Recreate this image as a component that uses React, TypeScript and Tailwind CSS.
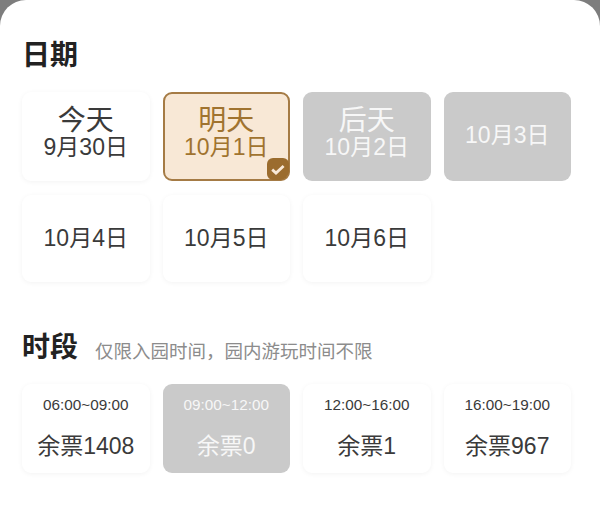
import React from 'react';

const font = {fontFamily: '"Liberation Sans", "Noto Sans CJK SC", sans-serif'};

const card =
  'relative flex flex-col items-center justify-center rounded-[9px] bg-white shadow-[0_1px_5px_rgba(0,0,0,0.05)]';
const off = 'relative flex flex-col items-center justify-center rounded-[9px] bg-[#cacaca] text-[#f7f7f7]';

const Check = () => (
  <span className="absolute bottom-[-1px] right-[-1px] flex h-[22px] w-[22px] items-center justify-center rounded-[6px] rounded-br-[9px] bg-[#9b6c2e]">
    <svg width="16" height="13" viewBox="0 0 16 13" fill="none">
      <path d="M2.2 6.6 L6 10 L13.6 3" stroke="#f8e8d6" strokeWidth="2.8" />
    </svg>
  </span>
);

const times = [
  {time: '06:00~09:00', left: '余票1408', disabled: false},
  {time: '09:00~12:00', left: '余票0', disabled: true},
  {time: '12:00~16:00', left: '余票1', disabled: false},
  {time: '16:00~19:00', left: '余票967', disabled: false},
];

export default function App() {
  return (
    <div className="h-[506px] w-[600px] overflow-hidden bg-[#7d7d7d]" style={font}>
      <div className="h-full rounded-t-[26px] bg-white pl-[22px] pr-[29px] pt-[39px]">
        {/* 日期 */}
        <h2 className="text-[28px] font-bold leading-[34px] text-[#222]">日期</h2>
        <div className="mt-[19px] grid grid-cols-4 gap-x-[13px]">
          <div className={`${card} h-[89px] pb-[6px] text-[#3a3a3a]`}>
            <span className="text-[28px] leading-[26px]">今天</span>
            <span className="text-[23px] leading-[26px]">9月30日</span>
          </div>
          <div className="relative flex h-[89px] flex-col items-center justify-center rounded-[9px] border-2 border-[#a57b45] bg-[#f8e8d6] pb-[6px] text-[#a0732f]">
            <span className="text-[28px] leading-[26px]">明天</span>
            <span className="text-[23px] leading-[26px]">10月1日</span>
            <Check />
          </div>
          <div className={`${off} h-[89px] pb-[6px]`}>
            <span className="text-[28px] leading-[26px]">后天</span>
            <span className="text-[23px] leading-[26px]">10月2日</span>
          </div>
          <div className={`${off} h-[89px] pb-[3px]`}>
            <span className="text-[23px] leading-[26px]">10月3日</span>
          </div>
        </div>
        <div className="mt-[14px] grid grid-cols-4 gap-x-[13px] text-[#3a3a3a]">
          <div className={`${card} h-[87px] pb-[2px]`}>
            <span className="text-[23px] leading-[26px]">10月4日</span>
          </div>
          <div className={`${card} h-[87px] pb-[2px]`}>
            <span className="text-[23px] leading-[26px]">10月5日</span>
          </div>
          <div className={`${card} h-[87px] pb-[2px]`}>
            <span className="text-[23px] leading-[26px]">10月6日</span>
          </div>
        </div>

        {/* 时段 */}
        <div className="mt-[49px] flex items-center">
          <h2 className="text-[28px] font-bold leading-[34px] text-[#222]">时段</h2>
          <span className="ml-[17px] mt-[8px] text-[18.5px] leading-[24px] text-[#8c8c8c]">
            仅限入园时间，园内游玩时间不限
          </span>
        </div>
        <div className="mt-[19px] grid grid-cols-4 gap-x-[13px]">
          {times.map(t => (
            <div
              key={t.time}
              className={`${t.disabled ? off : `${card} text-[#3a3a3a]`} h-[89px] gap-[18px] pb-[1px]`}
            >
              <span className="text-[15.3px] leading-[18px]">{t.time}</span>
              <span className="text-[23px] leading-[28px]">{t.left}</span>
            </div>
          ))}
        </div>
      </div>
    </div>
  );
}
